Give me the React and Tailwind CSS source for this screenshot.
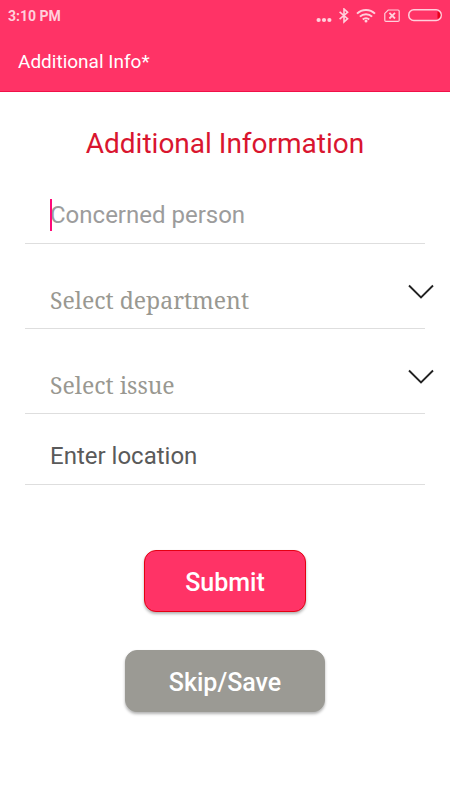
const inputClass =
  'block w-full px-[25px] bg-transparent font-[Roboto,sans-serif] text-[24px] leading-8 outline-none';

function StatusIcons() {
  return (
    <div className="flex items-center text-[#ffd0dc]">
      <svg width="16" height="16" viewBox="0 0 16 16" fill="currentColor" aria-hidden="true">
        <circle cx="2.6" cy="12" r="2.1" />
        <circle cx="8" cy="12" r="2.1" />
        <circle cx="13.4" cy="12" r="2.1" />
      </svg>
      <svg className="ml-1.5" width="12" height="16" viewBox="0 0 12 16" fill="none" stroke="currentColor" strokeWidth="1.6" aria-hidden="true">
        <path d="M1.6 3.8 9.6 10.700 6 14V1L9.600 4.300 1.6 11.200" />
      </svg>
      <svg className="ml-1.5" width="20" height="16" viewBox="0 0 20 16" fill="none" stroke="currentColor" strokeWidth="2" aria-hidden="true">
        <path d="M1 5.600a12.9 12.9 0 0 1 18 0" />
        <path d="M3.9 8.600a8.8 8.8 0 0 1 12.2 0" />
        <path d="M6.8 11.400a4.7 4.7 0 0 1 6.4 0" />
        <circle cx="10" cy="12.900" r="1.500" fill="currentColor" stroke="none" />
      </svg>
      <svg className="ml-2" width="16" height="16" viewBox="0 0 16 16" fill="none" stroke="currentColor" aria-hidden="true">
        <path d="M4.2 2H14a1.2 1.2 0 0 1 1.2 1.2v9a1.2 1.2 0 0 1-1.2 1.2H2A1.2 1.2 0 0 1 .8 12.200V5.400z" strokeWidth="1.2" />
        <path d="m5.400 4.900 5.600 5.600m0-5.600-5.600 5.600" strokeWidth="1.8" />
      </svg>
      <svg className="ml-2" width="34" height="16" viewBox="0 0 34 16" fill="none" aria-hidden="true">
        <rect x="0.800" y="1.800" width="32.400" height="10.600" rx="5" stroke="currentColor" strokeWidth="1.500" />
        <path d="M29.500 3.500c4 1 4 6.200 0 7.200z" fill="#e8001c" />
      </svg>
    </div>
  );
}

function SelectField({ id, label, options }) {
  return (
    <div className="relative border-b border-[#dedede] pt-10 pb-3">
      <select
        id={id}
        aria-label={label}
        defaultValue=""
        className="block w-full appearance-none bg-transparent px-[25px] font-['Noto_Serif','Droid_Serif','Liberation_Serif',serif] text-[23px] leading-8 text-[#999891] outline-none"
      >
        <option value="">{label}</option>
        {options.map((option) => (
          <option key={option}>{option}</option>
        ))}
      </select>
      <svg
        className="pointer-events-none absolute top-10 -right-2.5"
        width="28"
        height="16"
        viewBox="0 0 28 16"
        fill="none"
        stroke="#222"
        strokeWidth="1.900"
        aria-hidden="true"
      >
        <path d="M2 1.500 14 13.500 26 1.500" />
      </svg>
    </div>
  );
}

export default function App() {
  return (
    <div className="min-h-screen bg-white font-[Roboto,sans-serif]">
      <header className="border-b border-[#f01048] bg-[#ff3366]">
        <div className="flex h-8 items-center justify-between px-2">
          <span className="text-[14px] font-bold leading-4 text-[#ffd0dc]">3:10 PM</span>
          <StatusIcons />
        </div>
        <h1 className="px-[18px] pt-[18px] pb-[17px] text-[19px] leading-6 text-white">
          Additional Info*
        </h1>
      </header>

      <main className="px-[25px] pt-8">
        <h2 className="text-center text-[28px] leading-10 text-[#d9152f]">Additional Information</h2>

        <form onSubmit={(e) => e.preventDefault()}>
          <div className="relative border-b border-[#dedede] pt-[35px] pb-3">
            {/* Cursor */}
            <span className="absolute bottom-3 left-[25px] h-8 w-0.5 bg-[#ff0a78]"></span>
            <input
              id="person"
              type="text"
              aria-label="Concerned person"
              placeholder="Concerned person"
              className={`${inputClass} caret-[#ff0a78] placeholder:text-[#9c9c9c]`}
            />
          </div>

          <SelectField id="department" label="Select department" options={[]} />
          <SelectField id="issue" label="Select issue" options={[]} />

          <div className="border-b border-[#dedede] pt-[26px] pb-3">
            <input
              id="location"
              type="text"
              aria-label="Enter location"
              placeholder="Enter location"
              className={`${inputClass} placeholder:text-[#5a5a5a]`}
            />
          </div>

          <div className="flex flex-col items-center gap-[38px] pt-[65px] pb-10">
            <button
              type="submit"
              className="rounded-xl border border-[#e50012] bg-[#ff3366] px-10 pt-4 pb-3 text-[25px] font-medium leading-8 text-white shadow-[0_2px_3px_rgba(0,0,0,0.3)]"
            >
              Submit
            </button>
            <button
              type="button"
              className="rounded-xl border border-[#9b9a94] bg-[#9b9a94] px-[43px] pt-4 pb-3 text-[25px] font-medium leading-8 text-white shadow-[0_2px_3px_rgba(0,0,0,0.3)]"
            >
              Skip/Save
            </button>
          </div>
        </form>
      </main>
    </div>
  );
}
